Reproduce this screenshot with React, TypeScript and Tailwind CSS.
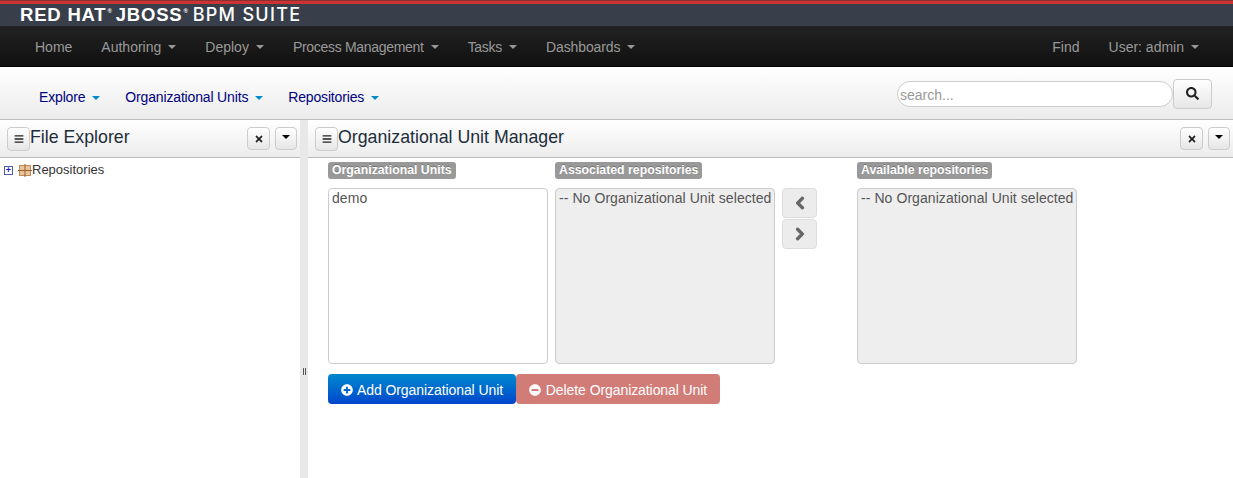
import { FaBars, FaChevronLeft, FaChevronRight, FaMinusCircle, FaPlusCircle, FaSearch, FaTimes } from 'react-icons/fa';

const mainNav = [
  { label: 'Home', caret: false, tracking: '' },
  { label: 'Authoring', caret: true, tracking: '' },
  { label: 'Deploy', caret: true, tracking: '' },
  { label: 'Process Management', caret: true, tracking: 'tracking-[-0.3px]' },
  { label: 'Tasks', caret: true, tracking: 'tracking-[-0.3px]' },
  { label: 'Dashboards', caret: true, tracking: 'tracking-[-0.1px]' },
];

const subNav = ['Explore', 'Organizational Units', 'Repositories'];

function Caret({ color }: { color: string }) {
  return <span className={`ml-[7px] inline-block h-0 w-0 border-x-[4px] border-t-[4px] border-x-transparent ${color}`} />;
}

function PanelButton({ children, className }: { children: React.ReactNode; className: string }) {
  return (
    <button className={`flex items-center justify-center rounded-[4px] border border-[#ccc] bg-gradient-to-b from-white to-[#e6e6e6] text-[#222] ${className}`}>
      {children}
    </button>
  );
}

function PanelHeader({ title }: { title: string }) {
  return (
    <div className="flex h-[38px] shrink-0 items-start border-b border-[#bbb] bg-gradient-to-b from-white to-[#ececec] pr-[3px] pt-[7px]">
      <PanelButton className="ml-[7px] h-[24px] w-[23px] text-[10px]">
        <FaBars />
      </PanelButton>
      <span className="text-[17.75px] leading-[20px] text-[#222d3a]">{title}</span>
      <PanelButton className="ml-auto h-[23px] w-[23px] text-[10px]">
        <FaTimes />
      </PanelButton>
      <PanelButton className="ml-[5px] h-[23px] w-[22px] pb-[3px]">
        <span className="inline-block h-0 w-0 border-x-[4px] border-t-[4px] border-x-transparent border-t-black" />
      </PanelButton>
    </div>
  );
}

function ListBox({ text, disabled }: { text: string; disabled?: boolean }) {
  return (
    <div className={`h-[176px] w-[220px] overflow-hidden whitespace-nowrap rounded-[4px] border border-[#ccc] px-[3px] text-[14px] leading-[18px] tracking-[0.07px] text-[#555] ${disabled ? 'bg-[#eeeeee]' : 'bg-white'}`}>
      {text}
    </div>
  );
}

function Label({ text }: { text: string }) {
  return (
    <div className="flex h-[17px]">
      <span className="rounded-[3px] bg-[#999] px-[4px] text-[12.3px] font-bold leading-[17px] text-white [text-shadow:0_-1px_0_rgba(0,0,0,0.25)]">{text}</span>
    </div>
  );
}

export default function App() {
  return (
    <div className="flex h-[478px] w-[1233px] flex-col overflow-hidden bg-white font-['Liberation_Sans',sans-serif]">
      <div className="h-[4px] shrink-0 border-t border-[#8c2f33] bg-[#cc3333]" />
      <div className="flex h-[22px] shrink-0 items-center bg-[#393f4a] pl-[20px]">
        <span className="flex items-start text-[18.5px] font-bold leading-[22px] tracking-[0.8px] text-white">
          RED HAT
          <span className="ml-[1px] mr-[3px] text-[6px] leading-[14px]">®</span>
          JBOSS
          <span className="ml-[1px] mr-[4px] text-[6px] leading-[14px]">®</span>
          <span className="font-['Inter',sans-serif] text-[18px] font-medium tracking-[1.3px]">BPM SUITE</span>
        </span>
      </div>

      <div className="flex h-[41px] shrink-0 items-center border-b border-black bg-gradient-to-b from-[#222222] to-[#111111] pl-[35px] pr-[34px] pt-[2px] text-[14px] text-[#999]">
        {mainNav.map(item => (
          <span key={item.label} className={`mr-[29px] flex items-center ${item.tracking}`}>
            {item.label}
            {item.caret && <Caret color="border-t-[#999]" />}
          </span>
        ))}
        <span className="ml-auto">Find</span>
        <span className="ml-[29px] flex items-center">
          User: admin
          <Caret color="border-t-[#999]" />
        </span>
      </div>

      <div className="flex h-[53px] shrink-0 items-center border-b border-[#bbb] bg-gradient-to-b from-white to-[#ececec] pl-[39px] pr-[21px] text-[14px] tracking-[-0.16px] text-[#000080]">
        {subNav.map(item => (
          <span key={item} className="mr-[25px] mt-[9px] flex items-center">
            {item}
            <Caret color="border-t-[#0088cc]" />
          </span>
        ))}
        <div className="ml-auto mt-[1px] flex items-center tracking-normal">
          <div className="flex h-[26px] w-[276px] items-center rounded-full border border-[#ccc] bg-white px-[2px] pt-[3px] text-[14px] text-[#999]">search...</div>
          <button className="flex h-[30px] w-[39px] items-center justify-center rounded-[4px] border border-[#ccc] bg-gradient-to-b from-white to-[#e6e6e6] text-[13px] text-[#222]">
            <FaSearch />
          </button>
        </div>
      </div>

      <div className="flex min-h-0 flex-1">
        <div className="flex w-[300px] shrink-0 flex-col">
          <PanelHeader title="File Explorer" />
          <div className="flex items-center pl-[4px] pt-[4px] text-[13px] leading-[16px] text-[#333]">
            <span className="flex h-[9px] w-[9px] items-center justify-center border border-[#4a5fa8] text-[9px] font-bold leading-none text-[#1a1acc]">+</span>
            <svg className="ml-[5px]" width="14" height="13" viewBox="0 0 14 13">
              <rect x="1.5" y="1.5" width="11" height="10" fill="#e8c49a" stroke="#c08a5a" />
              <path d="M7 0v13M0 6.5h14" stroke="#9c5f32" />
            </svg>
            <span>Repositories</span>
          </div>
        </div>

        <div className="flex w-[8px] shrink-0 justify-center gap-[1px] bg-[#e8e8e8] pl-[1px] pt-[248px]">
          <span className="h-[7px] w-[1px] bg-[#555]" />
          <span className="h-[7px] w-[1px] bg-[#555]" />
        </div>

        <div className="flex min-w-0 flex-1 flex-col">
          <PanelHeader title="Organizational Unit Manager" />
          <div className="pl-[20px] pt-[4px]">
            <div className="flex">
              <div className="mr-[7px] flex flex-col gap-[9px]">
                <Label text="Organizational Units" />
                <ListBox text="demo" />
              </div>
              <div className="mr-[7px] flex flex-col gap-[9px]">
                <Label text="Associated repositories" />
                <ListBox text="-- No Organizational Unit selected" disabled />
              </div>
              <div className="mr-[40px] flex flex-col gap-[1px] pt-[26px]">
                <button className="flex h-[30px] w-[35px] items-center justify-center rounded-[4px] border border-[#ddd] bg-[#ececec] text-[14px] text-[#666]">
                  <FaChevronLeft className="stroke-[40px]" />
                </button>
                <button className="flex h-[30px] w-[35px] items-center justify-center rounded-[4px] border border-[#ddd] bg-[#ececec] text-[14px] text-[#666]">
                  <FaChevronRight className="stroke-[40px]" />
                </button>
              </div>
              <div className="flex flex-col gap-[9px]">
                <Label text="Available repositories" />
                <ListBox text="-- No Organizational Unit selected" disabled />
              </div>
            </div>
            <div className="mt-[10px] flex">
              <button className="flex h-[30px] w-[188px] items-center justify-center gap-[4px] rounded-[4px] bg-gradient-to-b from-[#0088cc] to-[#0044cc] pt-[2px] text-[14px] tracking-[-0.08px] text-white">
                <FaPlusCircle className="text-[12px]" />
                Add Organizational Unit
              </button>
              <button className="flex h-[30px] w-[204px] items-center justify-center gap-[5px] rounded-[4px] bg-[#d27c78] pt-[2px] text-[14px] tracking-[-0.08px] text-white">
                <FaMinusCircle className="text-[12px]" />
                Delete Organizational Unit
              </button>
            </div>
          </div>
        </div>
      </div>
    </div>
  );
}
